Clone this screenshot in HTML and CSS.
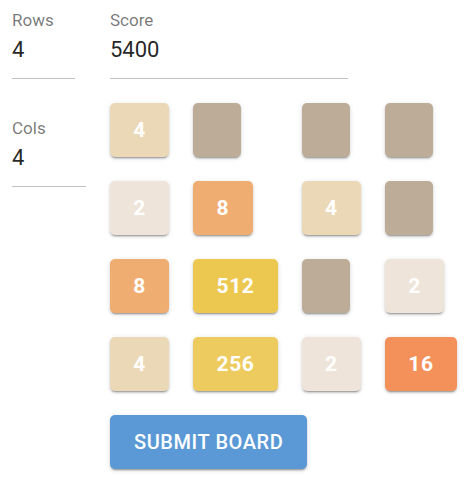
FILE: index.html
```html
<!DOCTYPE html>
<html lang="en">
<head>
<meta charset="utf-8">
<title>Board</title>
<link rel="stylesheet" href="styles.css">
</head>
<body>
<div class="page">
  <div class="side">
    <div class="field field-rows">
      <div class="label">Rows</div>
      <div class="value">4</div>
    </div>
    <div class="field field-cols">
      <div class="label">Cols</div>
      <div class="value">4</div>
    </div>
  </div>
  <div class="main">
    <div class="field field-score">
      <div class="label">Score</div>
      <div class="value">5400</div>
    </div>
    <div class="board">
      <div class="tile t4">4</div>
      <div class="tile t0"></div>
      <div class="tile t0"></div>
      <div class="tile t0"></div>

      <div class="tile t2">2</div>
      <div class="tile t8">8</div>
      <div class="tile t4">4</div>
      <div class="tile t0"></div>

      <div class="tile t8">8</div>
      <div class="tile t512">512</div>
      <div class="tile t0"></div>
      <div class="tile t2">2</div>

      <div class="tile t4">4</div>
      <div class="tile t256">256</div>
      <div class="tile t2">2</div>
      <div class="tile t16">16</div>
    </div>
    <button class="submit">Submit Board</button>
  </div>
</div>
</body>
</html>
```

FILE: styles.css
```css
* { box-sizing: border-box; }

body {
  margin: 0;
  background: #ffffff;
  font-family: Roboto, "Liberation Sans", Arial, sans-serif;
}

.page {
  display: flex;
  gap: 24px;
  padding: 10px 12px;
}

.side {
  width: 74px;
  display: flex;
  flex-direction: column;
  gap: 39px;
}

.main {
  display: flex;
  flex-direction: column;
  align-items: flex-start;
  gap: 24px;
}

.field {
  padding-bottom: 15px;
  border-bottom: 1px solid #c2c2c2;
}

.field-rows { width: 63px; }
.field-cols { width: 74px; }
.field-score { width: 238px; }

.label {
  font-size: 17px;
  line-height: 20px;
  color: rgba(0, 0, 0, 0.54);
}

.value {
  margin-top: 7px;
  font-size: 22px;
  line-height: 26px;
  color: rgba(0, 0, 0, 0.87);
}

.board {
  display: grid;
  grid-template-columns: repeat(4, auto);
  gap: 24px;
  justify-items: start;
}

.tile {
  min-width: 48px;
  height: 54px;
  padding: 0 23.3px;
  border-radius: 5px;
  display: flex;
  align-items: center;
  justify-content: center;
  color: #ffffff;
  font-size: 21px;
  font-weight: 700;
  letter-spacing: 0.6px;
  box-shadow: 0 3px 1px -2px rgba(0,0,0,0.2), 0 2px 2px 0 rgba(0,0,0,0.14), 0 1px 5px 0 rgba(0,0,0,0.12);
}

.t0 { background: #bdac97; padding: 0; width: 48px; }
.t2 { background: #eee4da; }
.t4 { background: #ebd8b6; }
.t8 { background: #f0ad72; }
.t16 { background: #f4915a; }
.t256 { background: #edcb5e; }
.t512 { background: #edc850; }

.submit {
  height: 54px;
  padding: 0 24px;
  border: none;
  border-radius: 5px;
  background: #5a99d5;
  color: #ffffff;
  font-family: Roboto, "Liberation Sans", Arial, sans-serif;
  font-size: 20px;
  font-weight: 500;
  letter-spacing: 0.02857em;
  text-transform: uppercase;
  box-shadow: 0 3px 1px -2px rgba(0,0,0,0.2), 0 2px 2px 0 rgba(0,0,0,0.14), 0 1px 5px 0 rgba(0,0,0,0.12);
}
```
